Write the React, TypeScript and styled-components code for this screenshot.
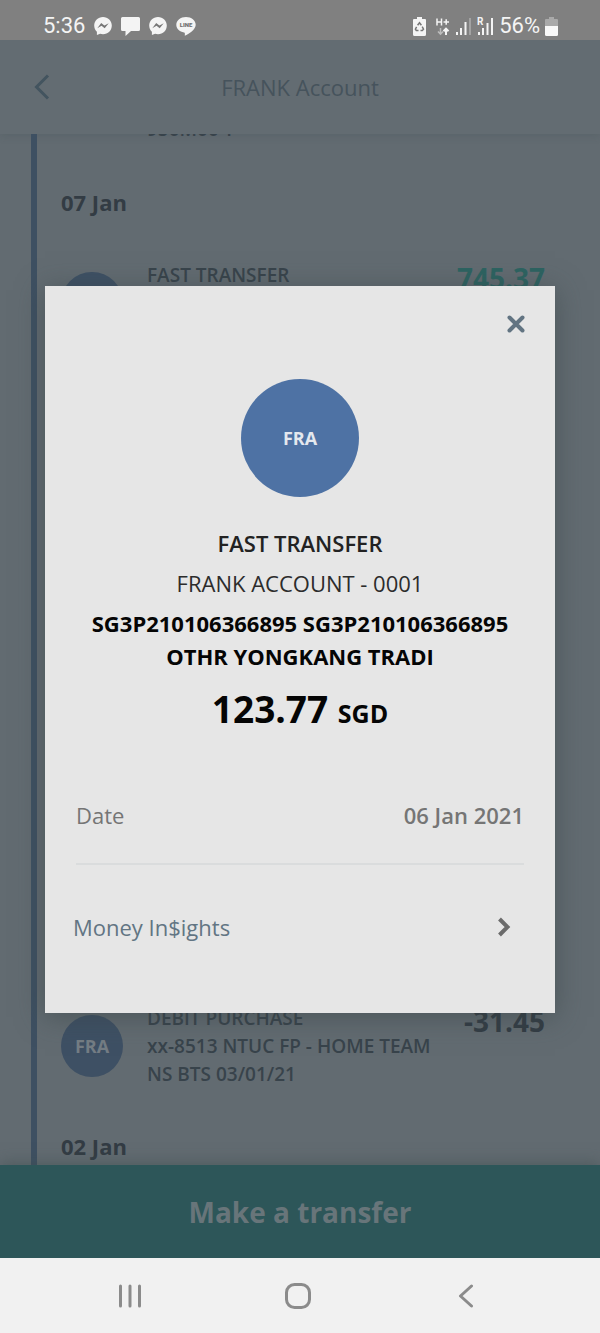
import React from "react";
import styled, { createGlobalStyle } from "styled-components";

const GlobalStyle = createGlobalStyle`
  *, *::before, *::after { box-sizing: border-box; }
  body { margin: 0; background: #626b71; }
  h1, h2, p, dl, dd, ul { margin: 0; padding: 0; }
  button { border: 0; padding: 0; background: none; font: inherit; color: inherit; cursor: pointer; }
`;

const Screen = styled.div`
  display: flex;
  flex-direction: column;
  min-height: 100vh;
  font-family: "Open Sans", "Noto Sans", sans-serif;
  color: #333c44;
`;

const StatusBar = styled.div`
  display: flex;
  justify-content: space-between;
  height: 40px;
  padding: 12px 42px 0 43px;
  background: #808080;
  color: #f4f4f4;
  font: 400 22px/28px Roboto, sans-serif;
`;

const StatusGroup = styled.div<{ $gap: number }>`
  display: flex;
  align-items: center;
  gap: ${(p) => p.$gap}px;
  height: 28px;
  svg { display: block; flex: none; }
`;

const AppArea = styled.div`
  position: relative;
  flex: 1;
  display: flex;
  flex-direction: column;
  overflow: hidden;
`;

const Header = styled.header`
  display: grid;
  grid-template-columns: 32px 1fr 32px;
  align-items: center;
  height: 94px;
  padding: 0 26px;
  background: #636c72;
  box-shadow: 0 1px 8px rgba(60, 75, 78, 0.25);
`;

const BackButton = styled.button`
  display: flex;
  align-items: center;
  justify-content: center;
  height: 44px;
`;

const HeaderTitle = styled.h1`
  text-align: center;
  font-size: 22px;
  font-weight: 400;
  line-height: 32px;
  color: #46535c;
`;

const Timeline = styled.main`
  flex: 1;
  display: flex;
  flex-direction: column;
  justify-content: space-between;
  margin-left: 31px;
  padding: 0 55px 5px 24px;
  border-left: 6px solid #3e5062;
  overflow: hidden;
`;

const EntryText = styled.p`
  flex: 1;
  align-self: flex-start;
  font-size: 19px;
  font-weight: 600;
  line-height: 28px;
  white-space: pre-line;
  color: #38434b;
`;

const PreviousEntry = styled.div`
  display: flex;
  height: 9px;
  margin-bottom: 45px;
  padding-left: 86px;
  ${EntryText} { align-self: flex-end; }
`;

const DayHeading = styled.h2<{ $after?: boolean }>`
  margin: ${(p) => (p.$after ? "44px 0 0" : "0 0 45px")};
  font-size: 22px;
  font-weight: 700;
  line-height: 28px;
`;

const Entry = styled.div`
  display: flex;
  align-items: center;
  gap: 24px;
  min-height: 84px;
`;

const Avatar = styled.div<{ $size: number; $bg: string; $color: string }>`
  display: flex;
  flex: none;
  align-items: center;
  justify-content: center;
  width: ${(p) => p.$size}px;
  height: ${(p) => p.$size}px;
  border-radius: 50%;
  background: ${(p) => p.$bg};
  color: ${(p) => p.$color};
  font-size: 18px;
  font-weight: 700;
`;

const EntryAmount = styled.p<{ $credit?: boolean }>`
  align-self: flex-start;
  font-size: 28px;
  font-weight: 700;
  line-height: 34px;
  color: ${(p) => (p.$credit ? "#2d6361" : "inherit")};
`;

const TransferButton = styled.button`
  height: 93px;
  background: #2d5659;
  color: #68757a;
  font-size: 28px;
  font-weight: 700;
  box-shadow: 0 -2px 14px rgba(60, 75, 75, 0.5);
`;

const Overlay = styled.div`
  position: absolute;
  inset: 0;
  display: flex;
  align-items: center;
  padding: 0 45px;
`;

const Dialog = styled.section`
  flex: 1;
  display: flex;
  flex-direction: column;
  padding: 21px 0;
  background: #e6e6e6;
  box-shadow: 0 4px 26px rgba(55, 68, 70, 0.55);
`;

const CloseButton = styled.button`
  display: flex;
  align-self: flex-end;
  align-items: center;
  justify-content: center;
  width: 34px;
  height: 34px;
  margin: 0 22px 38px 0;
`;

const Summary = styled.div`
  display: flex;
  flex-direction: column;
  align-items: center;
  padding: 0 30px;
  text-align: center;
  font-size: 22px;
`;

const Title = styled.h2`
  margin-top: 26px;
  font-size: 22px;
  font-weight: 600;
  line-height: 40px;
  color: #222;
`;

const Account = styled.p`
  line-height: 40px;
  color: #2c2c2c;
`;

const Reference = styled.p`
  margin: 4px 0 11px;
  font-weight: 700;
  line-height: 33px;
  color: #050505;
`;

const Amount = styled.p`
  font-size: 37px;
  font-weight: 700;
  line-height: 50px;
  color: #050505;
`;

const Currency = styled.span`
  font-size: 25px;
`;

const DateRow = styled.dl`
  display: flex;
  align-items: center;
  justify-content: space-between;
  height: 97px;
  margin: 30px 31px 0;
  border-bottom: 2px solid #dadcdd;
  font-size: 22px;
  color: #757575;
  dd { font-weight: 600; }
`;

const InsightsButton = styled.button`
  display: flex;
  align-items: center;
  justify-content: space-between;
  height: 127px;
  padding: 0 44px 2px 28px;
  font-size: 22px;
  color: #627583;
`;

const NavBar = styled.nav`
  display: grid;
  grid-template-columns: repeat(3, 1fr);
  height: 75px;
  padding: 0 50px 0 46px;
  background: #f1f1f1;
  color: #8b8b8b;
`;

const NavButton = styled.button`
  display: flex;
  align-items: center;
  justify-content: center;
`;

const Messenger = () => (
  <svg width="18" height="18" viewBox="0 0 18 18">
    <path fill="#f4f4f4" d="M9 0C4 0 .2 3.700.2 8.500c0 2.600 1 4.700 2.700 6.200V18l3.200-1.200c.9.300 1.900.4 2.900.4 5 0 8.800-3.700 8.800-8.600S14 0 9 0z" />
    <path fill="#777" d="M3.300 11.200l3.900-5.300 3.200 2.700 4.300-2.400-4 5.100-3.200-2.600z" />
  </svg>
);

const Chat = () => (
  <svg width="19" height="19" viewBox="0 0 19 19">
    <path fill="#f4f4f4" d="M1.500 0h16Q19 0 19 1.500v11q0 1.500-1.500 1.500H10l-5.500 5v-5h-3Q0 14 0 12.500v-11Q0 0 1.500 0z" />
  </svg>
);

const Line = () => (
  <svg width="20" height="19" viewBox="0 0 20 19">
    <path fill="#f4f4f4" d="M10 0C4.500 0 .3 3.400.3 7.800c0 4 3.200 6.800 7.800 7.600.8.200.9.700.7 3.400 4-2 10.900-6 10.900-11C19.700 3.400 15.500 0 10 0z" />
    <text x="10" y="10" textAnchor="middle" fontFamily="Roboto, sans-serif" fontSize="6" fontWeight="900" fill="#707070">LINE</text>
  </svg>
);

const BatterySaver = () => (
  <svg width="13" height="19" viewBox="0 0 13 19">
    <path fill="#f4f4f4" d="M4 0h5v2h3q1 0 1 1v14.500Q13 19 11.500 19h-10Q0 19 0 17.500V3q0-1 1-1h3z" />
    <path fill="none" stroke="#777" strokeWidth="1.500" d="M4.600 8.300l1.900-2.600 1.900 2.600M9.200 9.700l1.300 2.500-1.200 1.300H7.500M5.500 13.500H3.300l-.9-1.300 1.200-2.300" />
  </svg>
);

const MobileData = () => (
  <svg width="14" height="19" viewBox="0 0 14 19">
    <path fill="none" stroke="#f4f4f4" strokeWidth="1.500" d="M1 1.500v7M5.500 1.500v7M1 5h4.500M7.500 5H13M10.200 2.300v5.400" />
    <path fill="none" stroke="#bcbcbc" strokeWidth="1.500" d="M4.500 11v6M2 14.500l2.500 2.700L7 14.500" />
    <path fill="none" stroke="#f4f4f4" strokeWidth="2" d="M10 18v-6M7.500 14.200L10 11.600l2.500 2.600" />
  </svg>
);

const Signal = ({ roaming }: { roaming?: boolean }) => (
  <svg width="17" height="19" viewBox="0 0 17 19">
    <path fill="#f4f4f4" d={roaming ? "M1 15h2v3H1zM5 11h2v7H5zM9.500 6h2v12h-2z" : "M1 15h2v3H1zM5 11h2v7H5zM9.500 5h2v13h-2z"} />
    <path fill={roaming ? "#f4f4f4" : "#a3a3a3"} d="M14 1h2v17h-2z" />
    {roaming && <text x="0" y="8" fontFamily="Roboto, sans-serif" fontSize="10" fontWeight="700" fill="#f4f4f4">R</text>}
  </svg>
);

const Battery = () => (
  <svg width="13" height="19" viewBox="0 0 13 19">
    <path fill="#a9a9a9" d="M4 0h5v2h3q1 0 1 1v6H0V3q0-1 1-1h3z" />
    <path fill="#f8f8f8" d="M0 9h13v8.500Q13 19 11.500 19h-10Q0 19 0 17.500z" />
  </svg>
);

export default function App() {
  return (
    <Screen>
      <GlobalStyle />
      <StatusBar>
        <StatusGroup $gap={9}>
          <span>5:36</span>
          <Messenger />
          <Chat />
          <Messenger />
          <Line />
        </StatusGroup>
        <StatusGroup $gap={5}>
          <BatterySaver />
          <span />
          <MobileData />
          <Signal />
          <Signal roaming />
          <span>56%</span>
          <Battery />
        </StatusGroup>
      </StatusBar>

      <AppArea>
        <Header>
          <BackButton aria-label="Back">
            <svg width="16" height="26" viewBox="0 0 16 26" fill="none" stroke="#43545f" strokeWidth="3">
              <path d="M14 1.500L2.500 13 14 24.500" />
            </svg>
          </BackButton>
          <HeaderTitle>FRANK Account</HeaderTitle>
        </Header>

        <Timeline>
          <div>
            <PreviousEntry>
              <EntryText>950M00 T</EntryText>
            </PreviousEntry>
            <DayHeading>07 Jan</DayHeading>
            <Entry>
              <Avatar $size={62} $bg="#3e5064" $color="#747d84" />
              <EntryText>FAST TRANSFER</EntryText>
              <EntryAmount $credit>745.37</EntryAmount>
            </Entry>
          </div>
          <div>
            <Entry>
              <Avatar $size={62} $bg="#3e5064" $color="#747d84">FRA</Avatar>
              <EntryText>{"DEBIT PURCHASE\nxx-8513 NTUC FP - HOME TEAM\nNS BTS 03/01/21"}</EntryText>
              <EntryAmount>-31.45</EntryAmount>
            </Entry>
            <DayHeading $after>02 Jan</DayHeading>
          </div>
        </Timeline>

        <TransferButton>Make a transfer</TransferButton>

        <Overlay>
          <Dialog role="dialog" aria-labelledby="transfer-title">
            <CloseButton aria-label="Close">
              <svg width="18" height="18" viewBox="0 0 18 18" fill="none" stroke="#627482" strokeWidth="4" strokeLinecap="round">
                <path d="M2.500 2.500l13 13M15.500 2.500l-13 13" />
              </svg>
            </CloseButton>
            <Summary>
              <Avatar $size={118} $bg="#4e72a4" $color="#e4e8ee">FRA</Avatar>
              <Title id="transfer-title">FAST TRANSFER</Title>
              <Account>FRANK ACCOUNT - 0001</Account>
              <Reference>SG3P210106366895 SG3P210106366895 OTHR YONGKANG TRADI</Reference>
              <Amount>123.77 <Currency>SGD</Currency></Amount>
            </Summary>
            <DateRow>
              <dt>Date</dt>
              <dd>06 Jan 2021</dd>
            </DateRow>
            <InsightsButton>
              Money In$ights
              <svg width="14" height="20" viewBox="0 0 14 20" fill="none" stroke="#6b6b6b" strokeWidth="4">
                <path d="M2.500 2L10.500 10l-8 8" />
              </svg>
            </InsightsButton>
          </Dialog>
        </Overlay>
      </AppArea>

      <NavBar>
        <NavButton aria-label="Recent apps">
          <svg width="24" height="24" viewBox="0 0 24 24" fill="none" stroke="currentColor" strokeWidth="3" strokeLinecap="round">
            <path d="M2.500 2v20M12 2v20M21.500 2v20" />
          </svg>
        </NavButton>
        <NavButton aria-label="Home">
          <svg width="26" height="26" viewBox="0 0 26 26" fill="none" stroke="currentColor" strokeWidth="3">
            <rect x="1.500" y="1.500" width="23" height="23" rx="8" />
          </svg>
        </NavButton>
        <NavButton aria-label="Go back">
          <svg width="16" height="24" viewBox="0 0 16 24" fill="none" stroke="currentColor" strokeWidth="3" strokeLinecap="round" strokeLinejoin="round">
            <path d="M13.500 2L2.500 12l11 10" />
          </svg>
        </NavButton>
      </NavBar>
    </Screen>
  );
}
